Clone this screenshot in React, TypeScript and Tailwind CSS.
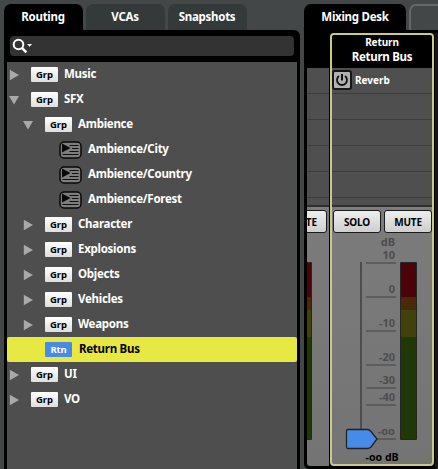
import React from "react";

type Kind = "Grp" | "Rtn" | "Event";
type Row = { label: string; kind: Kind; depth: number; state?: "open" | "closed" };

const rows: Row[] = [
  { label: "Music", kind: "Grp", depth: 0, state: "closed" },
  { label: "SFX", kind: "Grp", depth: 0, state: "open" },
  { label: "Ambience", kind: "Grp", depth: 1, state: "open" },
  { label: "Ambience/City", kind: "Event", depth: 2 },
  { label: "Ambience/Country", kind: "Event", depth: 2 },
  { label: "Ambience/Forest", kind: "Event", depth: 2 },
  { label: "Character", kind: "Grp", depth: 1, state: "closed" },
  { label: "Explosions", kind: "Grp", depth: 1, state: "closed" },
  { label: "Objects", kind: "Grp", depth: 1, state: "closed" },
  { label: "Vehicles", kind: "Grp", depth: 1, state: "closed" },
  { label: "Weapons", kind: "Grp", depth: 1, state: "closed" },
  { label: "Return Bus", kind: "Rtn", depth: 1 },
  { label: "UI", kind: "Grp", depth: 0, state: "closed" },
  { label: "VO", kind: "Grp", depth: 0, state: "closed" },
];

function Arrow({ state }: { state?: "open" | "closed" }) {
  return (
    <svg className="h-3 w-3 shrink-0" viewBox="0 0 12 12" fill="#a9a9a9">
      {state === "closed" && <path d="M1.800 .8v10.400l9.200-5.200z" />}
      {state === "open" && <path d="M1 2h10l-5 8.5z" />}
    </svg>
  );
}

function EventIcon() {
  return (
    <svg className="h-[18px] w-[23px] shrink-0" viewBox="0 0 23 18">
      <rect x="1" y="1" width="21" height="16" rx="4" fill="#7d7d7d" stroke="#080808" strokeWidth="1.5" />
      <path d="M3 2.5v9l8.500-4.500z" fill="#080808" />
      <path d="M10.500 4.500h9M13 7.500h6.500M10.500 10.500h9M3.500 13.500h16" stroke="#111" strokeWidth="1.1" />
    </svg>
  );
}

function TreeRow({ row }: { row: Row }) {
  const pad = row.depth === 0 ? "pl-[1px]" : row.depth === 1 ? "pl-[15px]" : "pl-[40px]";
  const selected = row.kind === "Rtn";
  return (
    <div
      className={`flex h-[25px] shrink-0 items-center text-[11.5px] font-bold tracking-[-0.27px] ${pad} ${
        selected ? "rounded-[2px] bg-[#e8e843] text-black" : "text-white"
      }`}
    >
      {row.kind === "Event" ? (
        <>
          <span className="ml-[12px] flex"><EventIcon /></span>
          <span className="ml-[6px] pb-px leading-none">{row.label}</span>
        </>
      ) : (
        <>
          <Arrow state={row.state} />
          <span
            className={`ml-[11px] flex h-[15px] w-[27px] shrink-0 items-center justify-center rounded-[1px] text-[9.5px] leading-none tracking-[-0.1px] ${
              selected ? "bg-[#468be6] text-white" : "bg-linear-to-b from-white to-[#dedede] text-black"
            }`}
          >
            {row.kind}
          </span>
          <span className={`pb-px leading-none ${selected ? "ml-[7px]" : "ml-[6px]"}`}>{row.label}</span>
        </>
      )}
    </div>
  );
}

function RoutingPanel() {
  return (
    <section className="flex w-[296px] shrink-0 flex-col">
      <div className="flex h-[26px] gap-[3px] text-[11.5px] font-bold leading-[26px] tracking-[-0.27px] text-white">
        <div className="w-[79px] rounded-t-[7px] bg-black pr-[1px] text-center">Routing</div>
        <div className="w-[79px] rounded-t-[7px] bg-[#343939] pr-[1px] text-center">VCAs</div>
        <div className="w-[79px] rounded-t-[7px] bg-[#343939] pr-[1px] text-center">Snapshots</div>
      </div>
      <div className="flex flex-1 flex-col rounded-tr-[6px] bg-black px-[3px] pt-[6px]">
        <div className="mx-[3px] flex h-[20px] items-center rounded-[4px] bg-[#333333] pl-[2px]">
          <svg width="22" height="16" viewBox="0 0 22 16">
            <circle cx="6.5" cy="6.5" r="4.8" fill="none" stroke="#fff" strokeWidth="2" />
            <path d="M9.800 9.800l4.600 4.600" stroke="#fff" strokeWidth="2.5" />
            <path d="M15 6h5l-2.500 2.800z" fill="#fff" />
          </svg>
        </div>
        <div className="mt-[6px] flex flex-1 flex-col bg-[#4e4e4e]">
          {rows.map((row) => <TreeRow key={row.label} row={row} />)}
        </div>
      </div>
    </section>
  );
}

function Slots({ effect }: { effect?: boolean }) {
  return (
    <div className="flex h-[139px] shrink-0 flex-col border-b-2 border-[#303030] bg-[#4f4f4f] text-white">
      <div className="flex h-[26px] shrink-0 items-center border-b border-[#3d3d3d]">
        {effect && (
          <>
            <svg className="mt-[-1px] shrink-0" width="20" height="20" viewBox="0 0 20 20">
              <rect x="1" y="1" width="18" height="18" rx="2" fill="#b1b1b1" stroke="#171717" strokeWidth="2" />
              <path d="M7 6a5 5 0 1 0 6 0" fill="none" stroke="#111" strokeWidth="1.8" />
              <path d="M10 4v6.500" stroke="#111" strokeWidth="2" />
            </svg>
            <span className="ml-[3px] pb-[2px] text-[10px] font-bold leading-none">Reverb</span>
          </>
        )}
      </div>
      {[0, 1, 2, 3].map((i) => <div key={i} className="h-[26px] shrink-0 border-b border-[#3d3d3d]" />)}
    </div>
  );
}

function ChannelButton({ children }: { children: React.ReactNode }) {
  return (
    <div className="flex h-[23px] w-[48px] shrink-0 items-center justify-center rounded-[3px] border-[1.5px] border-[#1c1c1c] bg-linear-to-b from-[#ededed] to-[#cfcfcf] text-[10px] font-bold leading-none tracking-[-0.2px] text-black">
      {children}
    </div>
  );
}

const marks = [
  { text: "10", y: 30 },
  { text: "0", y: 64 },
  { text: "-10", y: 98 },
  { text: "-20", y: 132 },
  { text: "-30", y: 155 },
  { text: "-40", y: 172 },
  { text: "-oo", y: 206 },
];

function Meter({ x }: { x: number }) {
  return (
    <g>
      <rect x={x} y="29" width="17" height="178" rx="1" fill="#262626" />
      <rect x={x + 1} y="30" width="15" height="34" fill="#4b0208" />
      <rect x={x + 1} y="64" width="15" height="13" fill="#49290a" />
      <rect x={x + 1} y="77" width="15" height="27" fill="#40420a" />
      <rect x={x + 1} y="104" width="15" height="102" fill="#203806" />
    </g>
  );
}

function Fader() {
  return (
    <svg className="shrink-0" width="100" height="231" viewBox="-1 0 100 231">
      <path d="M28 29v178" stroke="#4d4d4d" strokeWidth="2" />
      <g fill="#4d4d4d" fontSize="11" fontWeight="700" textAnchor="end">
        <text x="62" y="13">dB</text>
        {marks.map((m) => (
          <g key={m.text}>
            <text x="62" y={m.y - 4}>{m.text}</text>
            <path d={`M33 ${m.y}h30`} stroke="#555" strokeWidth="1.6" />
          </g>
        ))}
      </g>
      <Meter x={67} />
      <path d="M15 196.500h19.500q2 0 3.500 2l6 7.500-6 8q-1.500 1.500-3.500 1.500h-19.500q-1.500 0-1.500-1.500v-16q0-1.500 1.500-1.500z" fill="#468be6" stroke="#202225" strokeWidth="1.300" />
      <text x="32.5" y="227.5" fontSize="10.6" fontWeight="700">-oo dB</text>
    </svg>
  );
}

function ReturnBusChannel() {
  return (
    <div className="flex h-[433px] w-[104px] shrink-0 flex-col overflow-hidden rounded-[4px] border-2 border-[#cbca7e] bg-linear-to-b from-[#818181] to-[#747474]">
      <header className="flex h-[33px] shrink-0 flex-col items-center bg-black font-bold leading-none text-white">
        <span className="mt-[2px] text-[10px] leading-[10px] tracking-[-0.1px]">Return</span>
        <span className="mt-[3px] text-[11.5px] leading-[14px] tracking-[-0.27px]">Return Bus</span>
      </header>
      <Slots effect />
      <div className="mt-[3px] flex shrink-0 gap-[3px] pl-[1px]">
        <ChannelButton>SOLO</ChannelButton>
        <ChannelButton>MUTE</ChannelButton>
      </div>
      <Fader />
    </div>
  );
}

function NeighbourChannel() {
  return (
    <div className="flex w-[22px] shrink-0 flex-col overflow-hidden rounded-bl-[3px] bg-linear-to-b from-[#818181] to-[#747474]">
      <div className="h-[38px] shrink-0 bg-black" />
      <Slots />
      <div className="mt-[3px] flex justify-end pr-[2px]">
        <ChannelButton>MUTE</ChannelButton>
      </div>
      <svg className="shrink-0" width="22" height="231" viewBox="0 0 22 231">
        <Meter x={-12} />
      </svg>
    </div>
  );
}

function MixingDesk() {
  return (
    <section className="flex w-[134px] shrink-0 flex-col">
      <div className="flex h-[26px] gap-[3px]">
        <div className="w-[102px] shrink-0 rounded-t-[7px] bg-black text-center text-[11.5px] font-bold leading-[26px] tracking-[-0.27px] text-white">
          Mixing Desk
        </div>
        <div className="w-[40px] shrink-0 rounded-tl-[7px] border-t-2 border-l-2 border-[#656666]" />
      </div>
      <div className="flex h-[439px] shrink-0 rounded-bl-[5px] bg-black pl-[3px]">
        <div className="flex h-[436px] shrink-0"><NeighbourChannel /></div>
        <div className="ml-px pt-[3px]"><ReturnBusChannel /></div>
        <div className="mt-[3px] ml-px w-[3px] bg-[#171613]" />
      </div>
    </section>
  );
}

export default function App() {
  return (
    <main className="flex h-[469px] w-[438px] gap-[4px] overflow-hidden bg-[#434747] pt-[4px] pl-[4px] font-['Noto_Sans',sans-serif]">
      <RoutingPanel />
      <MixingDesk />
    </main>
  );
}
